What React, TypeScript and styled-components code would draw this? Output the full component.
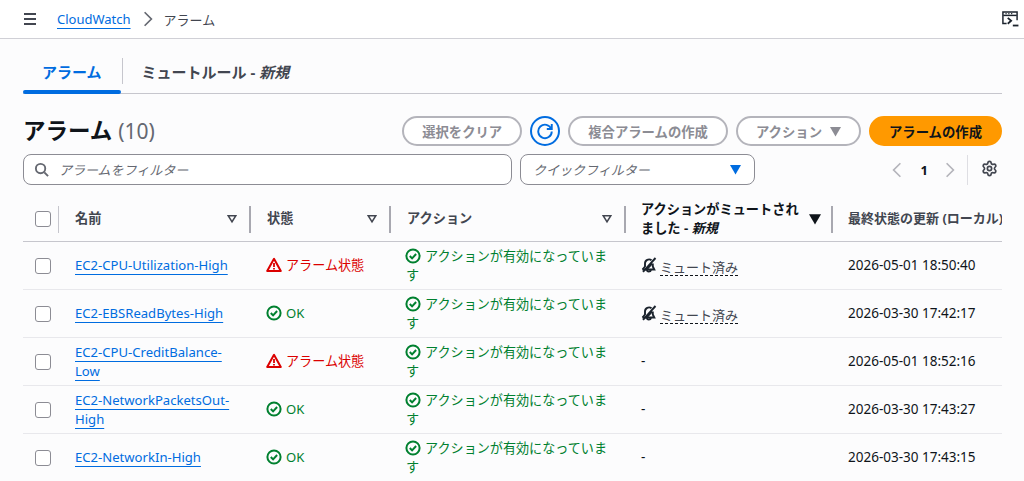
import React from 'react';
import styled, { createGlobalStyle } from 'styled-components';
import { Settings } from 'lucide-react';

const Global = createGlobalStyle`
  html, body {
    margin: 0;
    height: 100%;
    overflow: hidden;
    background: #fff;
    font-family: "Noto Sans", "Noto Sans CJK JP", sans-serif;
    font-size: 14px;
    color: #0f141a;
  }
`;

const TopBar = styled.header`
  height: 39px;
  box-sizing: border-box;
  display: flex;
  align-items: center;
  padding: 0 5px 0 22px;
  background: #fff;
  border-bottom: 1px solid #d0d0d6;
`;

const IconButton = styled.span`
  display: inline-flex;
  color: #424650;
`;

const Crumbs = styled.nav`
  display: flex;
  align-items: center;
  margin-left: 19px;
  flex: 1;
  color: #424650;
  font-size: 13px;
`;

const Link = styled.a`
  color: #006ce0;
  text-decoration: underline;
  text-underline-offset: 4px;
  text-decoration-thickness: 1px;
`;

const CrumbArrow = styled.span`
  display: inline-flex;
  margin: 0 7px 0 8px;
  color: #656871;
`;

const Main = styled.main`
  padding: 17px 22px 0 23px;
  background: #fcfcfd;
  height: 442px;
`;

const Tabs = styled.div`
  display: flex;
  align-items: center;
  height: 37px;
  border-bottom: 1px solid #c6c6cd;
`;

const Tab = styled.div<{ $active?: boolean }>`
  height: 37px;
  box-sizing: border-box;
  padding: 0 19px 7px;
  display: flex;
  align-items: center;
  font-size: 15px;
  font-weight: 700;
  position: relative;
  color: ${(p) => (p.$active ? '#006ce0' : '#424650')};
  ${(p) =>
    p.$active &&
    `&::after {
      content: '';
      position: absolute;
      left: 0;
      right: 0;
      bottom: -1px;
      height: 4px;
      border-radius: 4px;
      background: #006ce0;
    }`}
`;

const TabDivider = styled.span`
  width: 1px;
  height: 26px;
  margin: 0 0 7px 1px;
  background: #c6c6cd;
`;

const HeaderRow = styled.div`
  display: flex;
  align-items: center;
  justify-content: space-between;
  margin-top: 22px;
  height: 30px;
`;

const Title = styled.h1`
  margin: 0;
  font-size: 22.5px;
  font-weight: 700;
  line-height: 30px;
  color: #0f141a;
`;

const Count = styled.span`
  font-weight: 400;
  font-size: 21px;
  color: #656871;
`;

const Actions = styled.div`
  display: flex;
  align-items: center;
  gap: 8px;
`;

const Button = styled.button<{ $primary?: boolean }>`
  height: 30px;
  box-sizing: border-box;
  padding: 0 18px;
  border-radius: 15px;
  font: 700 13.35px "Noto Sans", "Noto Sans CJK JP", sans-serif;
  display: inline-flex;
  align-items: center;
  gap: 8px;
  white-space: nowrap;
  background: ${(p) => (p.$primary ? '#ff9900' : '#fff')};
  border: 2px solid ${(p) => (p.$primary ? '#ff9900' : '#b4b4bb')};
  color: ${(p) => (p.$primary ? '#0f141a' : '#8c8c94')};
`;

const RefreshButton = styled.span`
  width: 30px;
  height: 30px;
  box-sizing: border-box;
  border: 2px solid #006ce0;
  border-radius: 50%;
  color: #006ce0;
  display: inline-flex;
  align-items: center;
  justify-content: center;
`;

const FilterRow = styled.div`
  display: flex;
  align-items: center;
  margin-top: 8px;
  height: 31px;
`;

const SearchBox = styled.div`
  width: 489px;
  height: 31px;
  box-sizing: border-box;
  border: 1px solid #8c8c94;
  border-radius: 8px;
  background: #fff;
  display: flex;
  align-items: center;
  padding-left: 10px;
  gap: 10px;
  color: #656871;
`;

const Placeholder = styled.span`
  font-style: italic;
  font-size: 13px;
  color: #656871;
`;

const QuickFilter = styled.div`
  width: 235px;
  height: 31px;
  box-sizing: border-box;
  margin-left: 8px;
  border: 1px solid #8c8c94;
  border-radius: 8px;
  background: #fff;
  display: flex;
  align-items: center;
  justify-content: space-between;
  padding: 0 13px 0 12px;
`;

const Pager = styled.div`
  margin-left: auto;
  display: flex;
  align-items: center;
  height: 31px;
  color: #b4b4bb;
`;

const PageNumber = styled.span`
  font-weight: 700;
  font-size: 13px;
  color: #0f141a;
  margin: 0 13px 0 15px;
`;

const PagerSplit = styled.span`
  width: 1px;
  height: 30px;
  background: #dedee3;
  margin: 0 13px 0 8px;
`;

const GearWrap = styled.span`
  display: inline-flex;
  color: #424650;
  margin: -2px 4px 0 0;
`;

const TableClip = styled.div`
  margin-top: 11px;
  overflow: hidden;
  width: 979px;
`;

const Table = styled.table`
  width: 1100px;
  table-layout: fixed;
  border-collapse: collapse;
`;

const HeadCell = styled.th<{ $w: number; $dark?: boolean }>`
  width: ${(p) => p.$w}px;
  height: 45px;
  box-sizing: border-box;
  padding: 0;
  text-align: left;
  font-size: 13.2px;
  font-weight: 700;
  line-height: 19px;
  color: ${(p) => (p.$dark ? '#0f141a' : '#424650')};
  border-bottom: 1px solid #c6c6cd;
`;

const HeadInner = styled.div<{ $split?: boolean }>`
  position: relative;
  display: flex;
  align-items: center;
  justify-content: space-between;
  height: 45px;
  box-sizing: border-box;
  padding: 0 14px 0 16px;
  white-space: ${(p) => (p.$split ? 'normal' : 'nowrap')};
  &::after {
    content: '';
    position: absolute;
    right: 0;
    top: 10px;
    height: 27px;
    width: 2px;
    background: #a8a8b0;
  }
`;

const CheckHead = styled(HeadInner)`
  padding: 0 0 0 12px;
  &::after {
    width: 1px;
    background: #c6c6cd;
  }
`;

const MutedHead = styled(HeadInner)`
  padding: 0 12px 0 15px;
`;

const MutedTitle = styled.span`
  max-width: 162px;
`;

const UpdatedHead = styled(HeadInner)`
  padding-left: 15px;
  font-size: 13px;
`;

const Row = styled.tr`
  height: 48px;
  border-bottom: 1px solid #e8e8ec;
`;

const Cell = styled.td<{ $pad?: number; $left?: number }>`
  padding: 0 ${(p) => p.$pad ?? 10}px 0 ${(p) => p.$left ?? 16}px;
  vertical-align: middle;
  line-height: 19px;
  font-size: 13.5px;
  color: #0f141a;
`;

const CheckCell = styled.td`
  padding: 0 0 0 12px;
`;

const Checkbox = styled.span`
  display: block;
  width: 14px;
  height: 14px;
  border: 1px solid #8c8c94;
  border-radius: 3px;
  background: #fff;
`;

const NameLink = styled(Link)`
  font-size: 13.1px;
`;

const Status = styled.span<{ $color: string }>`
  color: ${(p) => p.$color};
  font-size: 13.1px;
  svg {
    vertical-align: -3px;
    margin: 0 4px 0 -1px;
  }
`;

const Muted = styled.span`
  display: inline-flex;
  align-items: center;
  gap: 3px;
  padding-top: 5px;
  color: #424650;
`;

const MutedLabel = styled.span`
  font-size: 13px;
  line-height: 16px;
  border-bottom: 1px dashed #0f141a;
`;

const Italic = styled.em`
  font-style: italic;
`;

type IconProps = { size?: number };

const Menu = () => (
  <svg width="16" height="16" viewBox="0 0 16 16" fill="none" stroke="currentColor" strokeWidth="2">
    <path d="M2 3h12M2 8h12M2 13h12" />
  </svg>
);

const Chevron = ({ left, size = 16 }: { left?: boolean; size?: number }) => (
  <svg width={size} height={size} viewBox="0 0 16 16" fill="none" stroke="currentColor" strokeWidth="1.5">
    <path d={left ? 'M11 2 5 8l6 6' : 'M5 2l6 6-6 6'} />
  </svg>
);

const ShellIcon = () => (
  <svg width="18" height="18" viewBox="0 0 16 16" fill="none" stroke="#1b232d" strokeWidth="1.3">
    <path d="M5 12H1.700V1.700h12.600V9" />
    <path d="M2 4.800h12" />
    <path d="M4 3.200h1M6.500 3.200h1M9 3.200h1" strokeWidth="1" />
    <path d="M6 7l3 2.600L6 12.200" strokeWidth="1.600" />
    <path d="M10.500 13.800H15.500" strokeWidth="1.600" />
  </svg>
);

const RefreshIcon = () => (
  <svg width="18" height="18" viewBox="0 0 16 16" fill="none" stroke="currentColor" strokeWidth="1.7">
    <path d="M13.600 6.200A6 6 0 1 0 14 8.400" />
    <path d="M14 1.800v4.400H9.600" />
  </svg>
);

const Search = () => (
  <svg width="15" height="15" viewBox="0 0 16 16" fill="none" stroke="currentColor" strokeWidth="2">
    <circle cx="7" cy="7" r="5" />
    <path d="m11 11 4 4" />
  </svg>
);

const Caret = ({ color, size = 10 }: { color: string; size?: number }) => (
  <svg width={size} height={size} viewBox="0 0 10 10">
    <path d="M0 1h10L5 9.500z" fill={color} />
  </svg>
);

const SortIcon = () => (
  <svg width="10" height="10" viewBox="0 0 10 10" fill="none" stroke="#424650" strokeWidth="1.6">
    <path d="M1.300 1.800h7.400L5 7.800z" />
  </svg>
);

const WarnIcon = ({ size = 16 }: IconProps) => (
  <svg width={size} height={size} viewBox="0 0 16 16" fill="none" stroke="#db0000" strokeWidth="2" strokeLinejoin="round">
    <path d="M8 1.800 1.200 14h13.600z" />
    <path d="M8 6v4M8 11v1.600" strokeWidth="1.800" />
  </svg>
);

const OkIcon = ({ size = 16 }: IconProps) => (
  <svg width={size} height={size} viewBox="0 0 16 16" fill="none" stroke="#00802f" strokeWidth="2">
    <circle cx="8" cy="8" r="6.600" />
    <path d="m4.800 8 2.300 2.400 4-4.400" />
  </svg>
);

const BellSvg = styled.svg`
  margin-top: -5px;
`;

const MutedBell = () => (
  <BellSvg width="16" height="16" viewBox="0 0 16 16" fill="none" stroke="#1b232d" strokeWidth="1.900">
    <path d="M1.500 12.500h11.800L11.800 9.500V6.500" />
    <path d="M1.500 12.500 4 9.500V6.500A4 4 0 0 1 10.500 3.300" />
    <path d="M6 13c0 2 3.500 2 4 0" />
    <path d="M14.500 1 2 14.800" />
    <path d="M11 6.500 5.500 12.500" />
  </BellSvg>
);

type Alarm = {
  name: string;
  alarm: boolean;
  muted: boolean;
  updated: string;
};

const alarms: Alarm[] = [
  { name: 'EC2-CPU-Utilization-High', alarm: true, muted: true, updated: '2026-05-01 18:50:40' },
  { name: 'EC2-EBSReadBytes-High', alarm: false, muted: true, updated: '2026-03-30 17:42:17' },
  { name: 'EC2-CPU-CreditBalance-Low', alarm: true, muted: false, updated: '2026-05-01 18:52:16' },
  { name: 'EC2-NetworkPacketsOut-High', alarm: false, muted: false, updated: '2026-03-30 17:43:27' },
  { name: 'EC2-NetworkIn-High', alarm: false, muted: false, updated: '2026-03-30 17:43:15' },
];

const App: React.FC = () => (
  <>
    <Global />
    <TopBar>
      <IconButton>
        <Menu />
      </IconButton>
      <Crumbs>
        <Link>CloudWatch</Link>
        <CrumbArrow>
          <Chevron size={18} />
        </CrumbArrow>
        アラーム
      </Crumbs>
      <ShellIcon />
    </TopBar>
    <Main>
      <Tabs>
        <Tab $active>アラーム</Tab>
        <TabDivider />
        <Tab>
          ミュートルール -&nbsp;<Italic>新規</Italic>
        </Tab>
      </Tabs>
      <HeaderRow>
        <Title>
          アラーム <Count>(10)</Count>
        </Title>
        <Actions>
          <Button>選択をクリア</Button>
          <RefreshButton>
            <RefreshIcon />
          </RefreshButton>
          <Button>複合アラームの作成</Button>
          <Button>
            アクション <Caret color="#8c8c94" size={11} />
          </Button>
          <Button $primary>アラームの作成</Button>
        </Actions>
      </HeaderRow>
      <FilterRow>
        <SearchBox>
          <Search />
          <Placeholder>アラームをフィルター</Placeholder>
        </SearchBox>
        <QuickFilter>
          <Placeholder>クイックフィルター</Placeholder>
          <Caret color="#006ce0" size={11} />
        </QuickFilter>
        <Pager>
          <Chevron left size={18} />
          <PageNumber>1</PageNumber>
          <Chevron size={18} />
          <PagerSplit />
          <GearWrap>
            <Settings size={17} strokeWidth={2.4} />
          </GearWrap>
        </Pager>
      </FilterRow>
      <TableClip>
        <Table>
          <thead>
            <tr>
              <HeadCell $w={36}>
                <CheckHead>
                  <Checkbox />
                </CheckHead>
              </HeadCell>
              <HeadCell $w={192}>
                <HeadInner>
                  名前 <SortIcon />
                </HeadInner>
              </HeadCell>
              <HeadCell $w={140}>
                <HeadInner>
                  状態 <SortIcon />
                </HeadInner>
              </HeadCell>
              <HeadCell $w={235}>
                <HeadInner>
                  アクション <SortIcon />
                </HeadInner>
              </HeadCell>
              <HeadCell $w={207} $dark>
                <MutedHead $split>
                  <MutedTitle>
                    アクションがミュートされました - <Italic>新規</Italic>
                  </MutedTitle>
                  <Caret color="#0f141a" size={12} />
                </MutedHead>
              </HeadCell>
              <HeadCell $w={290}>
                <UpdatedHead>
                  <span>最終状態の更新 (ローカル)</span>
                </UpdatedHead>
              </HeadCell>
            </tr>
          </thead>
          <tbody>
            {alarms.map((a) => (
              <Row key={a.name}>
                <CheckCell>
                  <Checkbox />
                </CheckCell>
                <Cell $pad={18}>
                  <NameLink>{a.name}</NameLink>
                </Cell>
                <Cell>
                  {a.alarm ? (
                    <Status $color="#db0000">
                      <WarnIcon />
                      アラーム状態
                    </Status>
                  ) : (
                    <Status $color="#00802f">
                      <OkIcon />
                      OK
                    </Status>
                  )}
                </Cell>
                <Cell $pad={12} $left={15}>
                  <Status $color="#00802f">
                    <OkIcon />
                    アクションが有効になっています
                  </Status>
                </Cell>
                <Cell $left={15}>
                  {a.muted ? (
                    <Muted>
                      <MutedBell />
                      <MutedLabel>ミュート済み</MutedLabel>
                    </Muted>
                  ) : (
                    '-'
                  )}
                </Cell>
                <Cell $left={15}>{a.updated}</Cell>
              </Row>
            ))}
          </tbody>
        </Table>
      </TableClip>
    </Main>
  </>
);

export default App;
